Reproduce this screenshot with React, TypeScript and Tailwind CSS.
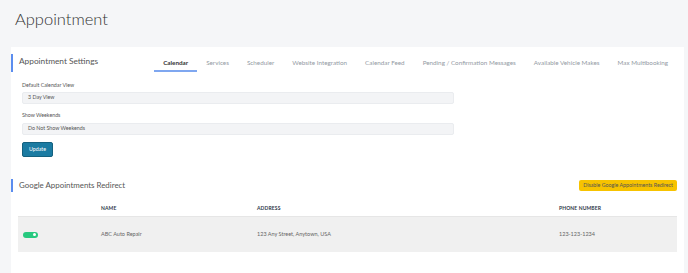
import React from "react";

const tabs = [
  "Calendar",
  "Services",
  "Scheduler",
  "Website Integration",
  "Calendar Feed",
  "Pending / Confirmation Messages",
  "Available Vehicle Makes",
  "Max Multibooking",
];

export default function App() {
  return (
    <div
      className="min-h-screen w-full bg-[#f5f6f8] overflow-hidden"
      style={{ fontFamily: "Lato, 'Open Sans', sans-serif" }}
    >
      <div className="pl-[15px] pt-[7px] h-[47px]">
        <h1 className="text-[16.5px] leading-[24px] font-light text-[#333]">Appointment</h1>
      </div>
      <div className="ml-[11px] mr-[4px] bg-white pt-[7px] pb-[30px]">
        {/* Section 1 header */}
        <div className="flex items-stretch justify-between pr-[7px] h-[18px]">
          <div className="border-l-2 border-[#5b8def] pl-[6px] flex items-center">
            <span className="text-[8.3px] text-[#555] leading-none -mt-[4px]">Appointment Settings</span>
          </div>
          <div className="flex">
            {tabs.map((t, i) => (
              <div
                key={t}
                className={
                  i === 0
                    ? "px-[9px] flex items-center border-b-2 border-[#7fa7f0] text-[6.3px] font-bold text-[#333] pt-[2px]"
                    : "px-[9px] flex items-center border-b-2 border-transparent text-[6.3px] text-[#939aa3] pt-[2px]"
                }
              >
                {t}
              </div>
            ))}
          </div>
        </div>
        {/* Form */}
        <div className="pl-[11px] pt-[9px]">
          <div className="text-[5.3px] text-[#555] leading-[8px]">Default Calendar View</div>
          <div className="mt-[3px] w-[432px] h-[12px] bg-[#f3f4f6] border border-[#eaecef] rounded-[2px] flex items-center pl-[5px] text-[5.3px] text-[#555]">
            3 Day View
          </div>
          <div className="mt-[7px] text-[5.3px] text-[#555] leading-[8px]">Show Weekends</div>
          <div className="mt-[4px] w-[432px] h-[12px] bg-[#f3f4f6] border border-[#eaecef] rounded-[2px] flex items-center pl-[5px] text-[5.3px] text-[#555]">
            Do Not Show Weekends
          </div>
          <button className="mt-[7px] w-[31px] h-[15px] bg-[#1b7ba2] border border-[#14617f] rounded-[2px] text-white text-[5.3px] flex items-center justify-center">
            Update
          </button>
        </div>
        {/* Section 2 header */}
        <div className="mt-[22px] flex items-center justify-between pr-[7px] h-[13px]">
          <div className="border-l-2 border-[#5b8def] pl-[6px] h-[13px] flex items-center">
            <span className="text-[7.9px] text-[#555] leading-none">Google Appointments Redirect</span>
          </div>
          <button className="h-[11px] px-[4px] bg-[#f7c300] rounded-[2px] text-[5.3px] text-[#555] flex items-center">
            Disable Google Appointments Redirect
          </button>
        </div>
        {/* Table */}
        <div className="pl-[7px] pr-[7px] mt-[10px]">
          <div className="grid grid-cols-[83px_156px_302px_1fr] h-[14px] items-center text-[5px] font-bold text-[#2d3748] tracking-wide">
            <div></div>
            <div>NAME</div>
            <div>ADDRESS</div>
            <div>PHONE NUMBER</div>
          </div>
          <div className="grid grid-cols-[83px_156px_302px_1fr] h-[36px] items-center bg-[#f0f0f0] border-t border-[#e6e6e6] text-[5.5px] text-[#666]">
            <div className="pl-[5px]">
              <div className="w-[15px] h-[6px] rounded-full bg-[#27c97f] relative">
                <div className="absolute right-[2px] top-[1.5px] w-[3px] h-[3px] rounded-full bg-white"></div>
              </div>
            </div>
            <div>ABC Auto Repair</div>
            <div>123 Any Street, Anytown, USA</div>
            <div>123-123-1234</div>
          </div>
        </div>
      </div>
    </div>
  );
}
